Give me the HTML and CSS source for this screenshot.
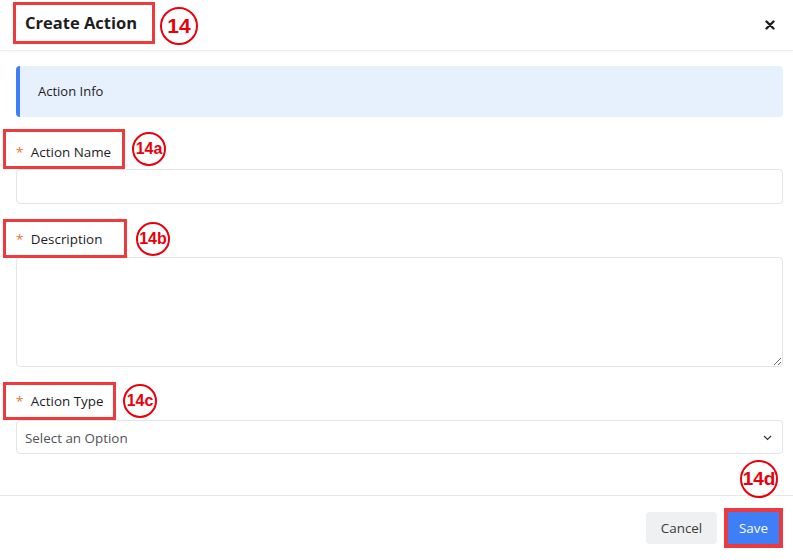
FILE: index.html
```html
<!DOCTYPE html>
<html lang="en">
<head>
    <meta charset="UTF-8">
    <meta name="viewport" content="width=device-width, initial-scale=1.0">
    <title>Create Action</title>
    <link rel="stylesheet" href="styles.css">
</head>
<body>
    <main class="modal">
        <header class="modal-header">
            <div class="titulo">
                <h1 class="marcado">Create Action</h1>
                <span class="nota nota-grande">14</span>
            </div>
            <button class="fechar" type="button" aria-label="Close">
                <svg width="10" height="10" viewBox="0 0 10 10">
                    <path d="M1.5 1.5 L8.5 8.5 M8.5 1.5 L1.5 8.5" stroke="#1f1f1f" stroke-width="2.4" stroke-linecap="round"/>
                </svg>
            </button>
        </header>

        <section class="modal-corpo">
            <div class="info">Action Info</div>

            <div class="rotulo rotulo-nome">
                <label class="marcado" for="nome"><span class="obrigatorio">*</span> Action Name</label>
                <span class="nota">14a</span>
            </div>
            <input class="campo" type="text" id="nome">

            <div class="rotulo rotulo-desc">
                <label class="marcado" for="descricao"><span class="obrigatorio">*</span> Description</label>
                <span class="nota">14b</span>
            </div>
            <textarea class="campo area" id="descricao"></textarea>

            <div class="rotulo rotulo-tipo">
                <label class="marcado" for="tipo"><span class="obrigatorio">*</span> Action Type</label>
                <span class="nota">14c</span>
            </div>
            <div class="campo seletor" id="tipo">
                <span>Select an Option</span>
                <svg width="9" height="6" viewBox="0 0 9 6">
                    <path d="M1 1 L4.5 4.5 L8 1" fill="none" stroke="#333" stroke-width="1.2"/>
                </svg>
            </div>

            <div class="linha-nota">
                <span class="nota nota-grande">14d</span>
            </div>
        </section>

        <footer class="modal-rodape">
            <button class="botao cancelar" type="button">Cancel</button>
            <button class="botao salvar" type="button">Save</button>
        </footer>
    </main>
</body>
</html>
```

FILE: styles.css
```css
:root {
    --azul: #3e7ef7;
    --azul-claro: #e7f0fd;
    --borda: #e2e4e8;
    --vermelho: #ee3a3d;
    --nota: #e8000b;
}

* {
    font-family: "Open Sans", "Noto Sans", sans-serif;
    padding: 0px;
    margin: 0px;
    box-sizing: border-box;
}

body {
    background-color: #ffffff;
    color: #1d1d1f;
    width: 793px;
    height: 560px;
    overflow: hidden;
}

.modal-header {
    height: 51px;
    display: flex;
    align-items: flex-start;
    justify-content: space-between;
    padding: 1px 18px 0px 13px;
    border-bottom: 1px solid #eeeeef;
    box-shadow: 0px 1px 3px rgba(0, 0, 0, 0.04);
}

.titulo {
    display: flex;
    align-items: center;
    gap: 5px;
}

.modal-header h1 {
    font-size: 16.5px;
    font-weight: 700;
    width: 142px;
    height: 42px;
    line-height: 36px;
    padding: 0px 0px 0px 9px;
}

.marcado {
    border: 3px solid var(--vermelho);
}

.nota {
    display: inline-flex;
    align-items: center;
    justify-content: center;
    width: 34px;
    height: 34px;
    border: 2.5px solid var(--nota);
    border-radius: 50%;
    color: var(--nota);
    font-family: "Liberation Sans", Arial, sans-serif;
    font-weight: 700;
    font-size: 16px;
    margin-left: 7px;
}

.nota-grande {
    width: 38px;
    height: 38px;
    font-size: 19px;
    margin-left: 0px;
}

.titulo .nota-grande {
    font-size: 21px;
    margin-top: 6px;
}

.fechar {
    background: none;
    border: none;
    margin-top: 15px;
    cursor: pointer;
}

.modal-corpo {
    padding: 15px 10px 0px 16px;
    height: 444px;
}

.info {
    background-color: var(--azul-claro);
    border-left: 4px solid var(--azul);
    border-radius: 4px;
    height: 51px;
    line-height: 51px;
    font-size: 13px;
    padding-left: 18px;
}

.rotulo {
    display: flex;
    align-items: center;
    margin: 12px 0px 0px -13px;
}

.rotulo label {
    display: block;
    height: 40px;
    line-height: 34px;
    font-size: 13.4px;
    white-space: nowrap;
    padding: 0px 0px 0px 10px;
    width: 122px;
}

.rotulo-nome label {
    padding-top: 3px;
}

.rotulo-desc {
    margin-top: 15px;
}

.rotulo-desc label {
    width: 124px;
    height: 39px;
}

.rotulo-desc .nota {
    margin-left: 9px;
}

.rotulo-tipo {
    margin-top: 15px;
}

.rotulo-tipo label {
    width: 113px;
    height: 38px;
    line-height: 33px;
}

.obrigatorio {
    color: #f0712e;
    margin-right: 4px;
}

.campo {
    display: block;
    width: 767px;
    height: 35px;
    border: 1px solid var(--borda);
    border-radius: 4px;
    background-color: #ffffff;
}

.area {
    height: 110px;
    margin-top: -1px;
    resize: vertical;
}

.seletor {
    height: 34px;
    display: flex;
    align-items: center;
    justify-content: space-between;
    padding: 2px 10px 0px 8px;
    font-size: 13.4px;
    color: #505258;
}

.linha-nota {
    display: flex;
    justify-content: flex-end;
    padding-right: 5px;
    margin-top: 6px;
}

.modal-rodape {
    display: flex;
    justify-content: flex-end;
    gap: 11px;
    padding: 16px 14px 0px 0px;
    border-top: 1px solid #e6e7ea;
}

.botao {
    height: 32px;
    border: none;
    border-radius: 4px;
    font-size: 13.4px;
    cursor: pointer;
}

.cancelar {
    width: 71px;
    background-color: #eff0f2;
    color: #3a3b3f;
}

.salvar {
    width: 51px;
    background-color: var(--azul);
    color: #ffffff;
    border-radius: 0px;
    outline: 4px solid var(--vermelho);
}
```
